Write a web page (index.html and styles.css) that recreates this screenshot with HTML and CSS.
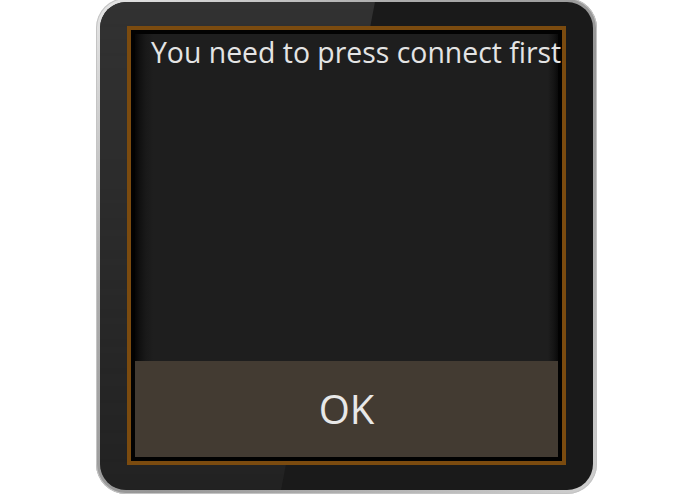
FILE: index.html
```html
<!DOCTYPE html>
<html lang="en">
<head>
<meta charset="utf-8">
<title>Alert</title>
<link rel="stylesheet" href="styles.css">
</head>
<body>
<div class="stage">
  <div class="watch">
    <div class="face">
      <div class="bezel">
        <div class="screen">
          <div class="message">
            <p class="msg-text">You need to press connect first</p>
          </div>
          <button class="ok" type="button">OK</button>
        </div>
      </div>
    </div>
  </div>
</div>
</body>
</html>
```

FILE: styles.css
```css
html, body {
  margin: 0;
  padding: 0;
  background: #ffffff;
}

.stage {
  display: flex;
  padding-left: 96px;
  margin-top: -2px;
}

.watch {
  width: 501px;
  height: 496px;
  box-sizing: border-box;
  padding: 4px;
  border-radius: 30px;
  background: linear-gradient(135deg, #e6e6e6 0%, #acacac 30%, #969696 55%, #d0d0d0 100%);
  box-shadow: inset 0 0 0 1px #c4c4c4;
}

.face {
  position: relative;
  width: 493px;
  height: 488px;
  box-sizing: border-box;
  padding: 24px 27px 25px;
  border-radius: 26px;
  background: #1a1a1a;
}

.face::before {
  content: "";
  position: absolute;
  inset: 0;
  border-radius: 26px;
  background: linear-gradient(100.9deg, #323232 269.5px, rgba(50, 50, 50, 0) 270.5px);
  -webkit-mask-image: linear-gradient(to bottom, #000 0%, rgba(0, 0, 0, 0.35) 100%);
  mask-image: linear-gradient(to bottom, #000 0%, rgba(0, 0, 0, 0.35) 100%);
}

.bezel {
  position: relative;
  width: 439px;
  height: 439px;
  box-sizing: border-box;
  border: 4px solid #7b4b0f;
  box-shadow: inset 0 0 0 1px #6a3f08;
}

.screen {
  display: flex;
  flex-direction: column;
  height: 100%;
  box-sizing: border-box;
  border: 4px solid #020202;
}

.message {
  flex: 1;
  background: linear-gradient(to right, #060606 0px, #111111 5px, #191919 11px, #1e1e1e 18px, #1e1e1e calc(100% - 10px), #141414 calc(100% - 4px), #0a0a0a 100%);
}

.msg-text {
  margin: 0;
  padding-left: 16px;
  font-family: "Open Sans", "DejaVu Sans", sans-serif;
  font-size: 28.4px;
  line-height: 36px;
  color: #e4e4e4;
  white-space: nowrap;
}

.ok {
  display: block;
  width: 100%;
  height: 96px;
  margin: 0;
  padding: 0;
  border: none;
  background: #433b32;
  color: #e8e8e8;
  font-family: "Open Sans", "DejaVu Sans", sans-serif;
  font-size: 40px;
  line-height: 96px;
  text-align: center;
}
```
